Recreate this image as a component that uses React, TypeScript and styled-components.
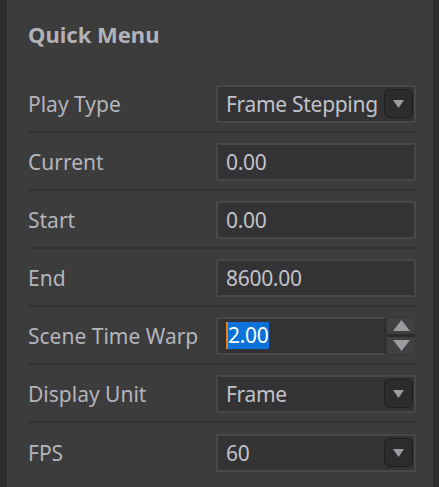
import React from 'react';
import styled, { createGlobalStyle } from 'styled-components';

const GlobalStyle = createGlobalStyle`
  html, body {
    margin: 0;
    padding: 0;
    background: #3c3c3c;
  }
  body {
    font-family: 'Noto Sans', 'Open Sans', sans-serif;
  }
`;

const Frame = styled.div`
  display: flex;
  width: 439px;
  height: 487px;
  background: #3c3c3c;
  overflow: hidden;
`;

const Strip = styled.div<{ $w: number }>`
  width: ${(p) => p.$w}px;
  flex-shrink: 0;
  background: #2d2d2d;
`;

const Panel = styled.div`
  flex: 1;
  display: flex;
  flex-direction: column;
  padding: 0 17px 0 21px;
`;

const Title = styled.h3`
  margin: 0;
  height: 75px;
  padding-top: 19px;
  box-sizing: border-box;
  font-size: 22px;
  line-height: 30px;
  font-weight: 700;
  color: #b2b2ba;
`;

const Row = styled.div<{ $last?: boolean }>`
  display: flex;
  align-items: center;
  justify-content: space-between;
  height: 58px;
  padding-top: 1px;
  box-sizing: border-box;
  border-bottom: ${(p) => (p.$last ? 'none' : '2px solid #333333')};
`;

const Label = styled.span`
  font-size: 21px;
  color: #b4b4bc;
`;

const Field = styled.div`
  display: flex;
  align-items: center;
  width: 200px;
  height: 38px;
  box-sizing: border-box;
  background: #333335;
  border: 2px solid #484848;
`;

const Value = styled.span`
  flex: 1;
  padding-left: 8px;
  font-size: 21px;
  letter-spacing: -0.3px;
  color: #c2c2ca;
  white-space: nowrap;
  overflow: hidden;
`;

const DropButton = styled.div`
  display: flex;
  align-items: center;
  justify-content: center;
  flex-shrink: 0;
  width: 29px;
  height: 29px;
  margin-right: 1px;
  box-sizing: border-box;
  background: #2c2c2d;
  border: 1px solid #1e1e1e;
  border-radius: 6px;
`;

const SpinField = styled.div`
  display: flex;
  width: 200px;
  height: 38px;
`;

const SpinInput = styled.div`
  flex: 1;
  display: flex;
  align-items: center;
  box-sizing: border-box;
  background: #333335;
  border: 2px solid #484848;
  border-right: 2px solid #2e2e2e;
  padding-left: 8px;
`;

const Caret = styled.span`
  width: 2px;
  height: 27px;
  background: #e8821e;
`;

const Selected = styled.span`
  font-size: 21px;
  line-height: 27px;
  letter-spacing: -0.3px;
  color: #ffffff;
  background: #0a72d8;
  padding-right: 1px;
`;

const Spinner = styled.div`
  display: flex;
  flex-direction: column;
  width: 30px;
  box-sizing: border-box;
  background: #404041;
  border: 1px solid #383838;
`;

const SpinHalf = styled.div<{ $top?: boolean }>`
  flex: 1;
  display: flex;
  align-items: center;
  justify-content: center;
  border-bottom: ${(p) => (p.$top ? '3px solid #2a2a2a' : 'none')};
`;

const Tri = ({ up, w = 12, h = 9 }: { up?: boolean; w?: number; h?: number }) => (
  <svg width={w} height={h} viewBox={`0 0 ${w} ${h}`}>
    <polygon
      points={up ? `0,${h} ${w / 2},0 ${w},${h}` : `0,0 ${w},0 ${w / 2},${h}`}
      fill="#9c9ca0"
    />
  </svg>
);

const rows: { label: string; value: string; kind: 'select' | 'text' }[] = [
  { label: 'Play Type', value: 'Frame Stepping', kind: 'select' },
  { label: 'Current', value: '0.00', kind: 'text' },
  { label: 'Start', value: '0.00', kind: 'text' },
  { label: 'End', value: '8600.00', kind: 'text' },
];

export default function App() {
  return (
    <>
      <GlobalStyle />
      <Frame>
        <Strip $w={7} />
        <Panel>
          <Title>Quick Menu</Title>
          {rows.map((r) => (
            <Row key={r.label}>
              <Label>{r.label}</Label>
              <Field>
                <Value>{r.value}</Value>
                {r.kind === 'select' ? (
                  <DropButton>
                    <Tri w={11} h={8} />
                  </DropButton>
                ) : null}
              </Field>
            </Row>
          ))}
          <Row>
            <Label>Scene Time Warp</Label>
            <SpinField>
              <SpinInput>
                <Caret />
                <Selected>2.00</Selected>
              </SpinInput>
              <Spinner>
                <SpinHalf $top>
                  <Tri up w={17} h={11} />
                </SpinHalf>
                <SpinHalf>
                  <Tri w={17} h={11} />
                </SpinHalf>
              </Spinner>
            </SpinField>
          </Row>
          <Row>
            <Label>Display Unit</Label>
            <Field>
              <Value>Frame</Value>
              <DropButton>
                <Tri w={11} h={8} />
              </DropButton>
            </Field>
          </Row>
          <Row $last>
            <Label>FPS</Label>
            <Field>
              <Value>60</Value>
              <DropButton>
                <Tri w={11} h={8} />
              </DropButton>
            </Field>
          </Row>
        </Panel>
        <Strip $w={6} />
      </Frame>
    </>
  );
}
